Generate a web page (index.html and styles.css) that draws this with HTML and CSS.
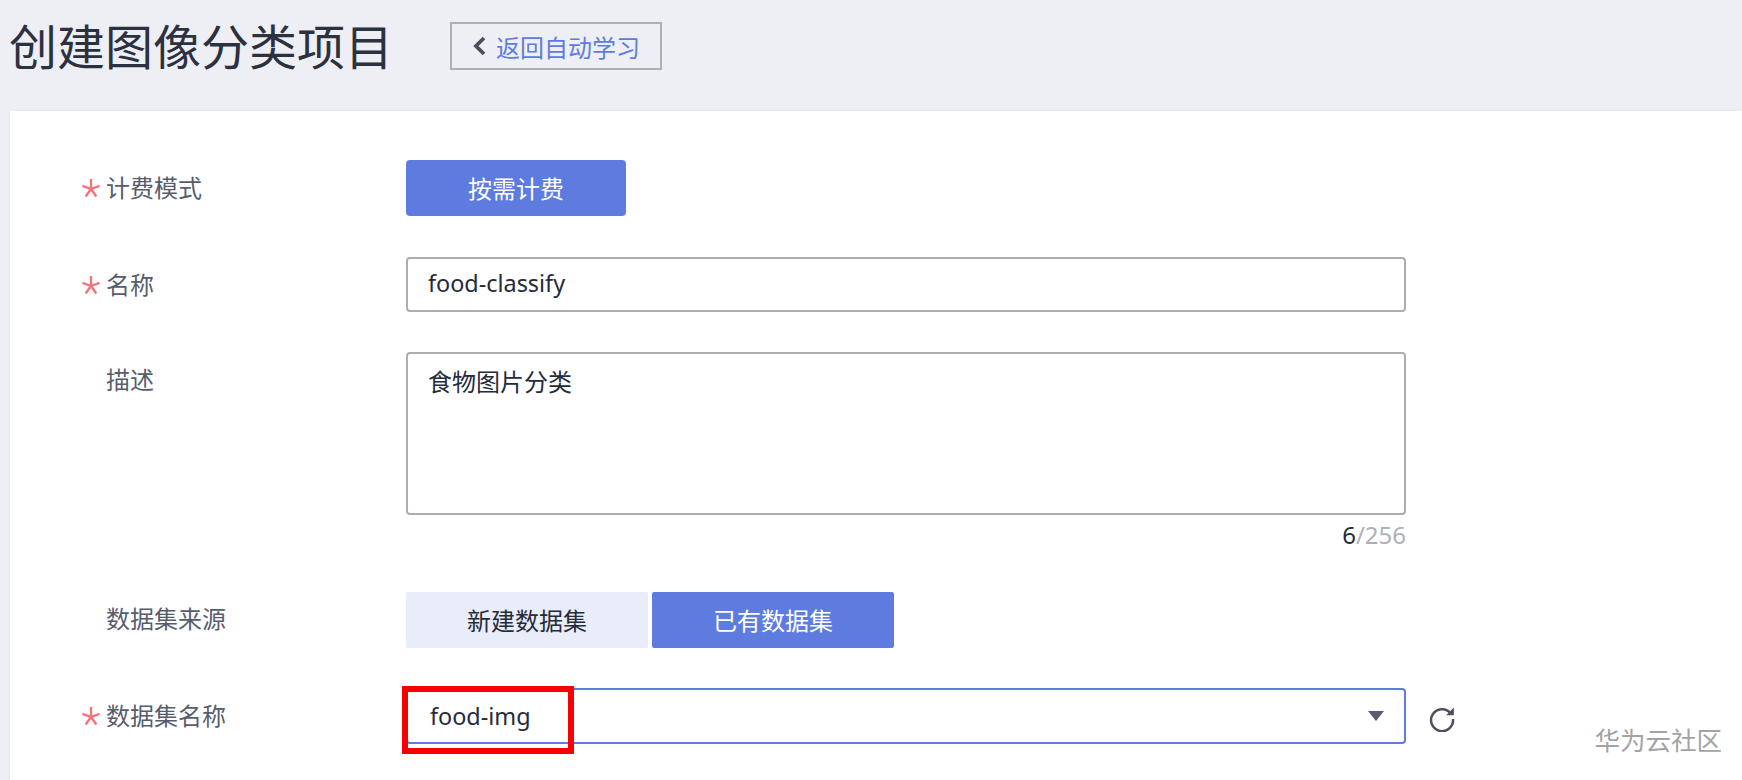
FILE: index.html
```html
<!DOCTYPE html>
<html lang="zh-CN">
<head>
    <meta charset="UTF-8">
    <title>创建图像分类项目</title>
    <link rel="stylesheet" href="styles.css">
</head>
<body>

    <!-- Page header -->
    <div class="header">
        <h1>创建图像分类项目</h1>
        <a class="back-btn" href="#">
            <svg class="back-icon" viewBox="0 0 14 20" width="14" height="20"><path d="M12 2 4 10l8 8" fill="none" stroke="#4c4f5e" stroke-width="3.8"/></svg>
            <span>返回自动学习</span>
        </a>
    </div>

    <!-- Form panel -->
    <div class="panel">
        <div class="row row-mode">
            <label class="field-label">
                <svg class="star" viewBox="0 0 18 18" width="18" height="18"><path d="M9 0v10M9 10 .5 6.8M9 10l8.5-3.2M9 10l-5.3 7.5M9 10l5.3 7.5" fill="none" stroke="#f4727a" stroke-width="2.4"/></svg>
                计费模式
            </label>
            <button class="btn btn-active btn-single">按需计费</button>
        </div>

        <div class="row row-name">
            <label class="field-label">
                <svg class="star" viewBox="0 0 18 18" width="18" height="18"><path d="M9 0v10M9 10 .5 6.8M9 10l8.5-3.2M9 10l-5.3 7.5M9 10l5.3 7.5" fill="none" stroke="#f4727a" stroke-width="2.4"/></svg>
                名称
            </label>
            <div class="input">food-classify</div>
        </div>

        <div class="row row-desc">
            <label class="field-label">描述</label>
            <div class="field-stack">
                <div class="textarea">食物图片分类</div>
                <div class="counter"><b>6</b>/256</div>
            </div>
        </div>

        <div class="row row-source">
            <label class="field-label">数据集来源</label>
            <div class="toggle">
                <button class="btn btn-plain">新建数据集</button>
                <button class="btn btn-active">已有数据集</button>
            </div>
        </div>

        <div class="row">
            <label class="field-label">
                <svg class="star" viewBox="0 0 18 18" width="18" height="18"><path d="M9 0v10M9 10 .5 6.8M9 10l8.5-3.2M9 10l-5.3 7.5M9 10l5.3 7.5" fill="none" stroke="#f4727a" stroke-width="2.4"/></svg>
                数据集名称
            </label>
            <div class="select">
                <span>food-img</span>
                <i class="caret"></i>
            </div>
            <svg class="refresh" viewBox="0 0 28 28" width="28" height="28"><path d="M22.6 9.2A11 11 0 1 0 25 15" fill="none" stroke="#4c4f5e" stroke-width="2.5"/><path d="M25.8 3.6v7.6h-7.6z" fill="#4c4f5e"/></svg>
            <div class="highlight"></div>
        </div>

        <div class="watermark">华为云社区</div>
    </div>

</body>
</html>
```

FILE: styles.css
```css
/* Reset margins and padding */
* {
    margin: 0;
    padding: 0;
    box-sizing: border-box;
}

body {
    font-family: "Noto Sans", "Noto Sans CJK SC", sans-serif;
    background-color: #eeeff5;
    color: #252b3a;
    height: 780px;
    overflow: hidden;
    display: flex;
    flex-direction: column;
}

/* Header */
.header {
    height: 111px;
    padding: 22px 0 0 9px;
    display: flex;
    align-items: flex-start;
}

.header h1 {
    font-size: 48px;
    font-weight: 400;
    line-height: 50px;
    width: 441px;
    color: #2c3140;
}

.back-btn {
    width: 212px;
    height: 48px;
    border: 2px solid #adaeb6;
    display: flex;
    align-items: center;
    padding-left: 20px;
    gap: 10px;
    font-size: 24px;
    color: #5e7ce0;
    text-decoration: none;
}

/* Form panel */
.panel {
    position: relative;
    flex-grow: 1;
    margin-left: 10px;
    padding: 49px 0 0 71px;
    background-color: #fff;
    box-shadow: 0 0 4px rgba(0, 0, 0, 0.06);
}

.row {
    position: relative;
    display: flex;
    align-items: flex-start;
}

.row-mode {
    margin-bottom: 41px;
}

.row-name {
    margin-bottom: 40px;
}

.row-source {
    margin-bottom: 40px;
}

.field-label {
    width: 325px;
    height: 55px;
    flex-shrink: 0;
    display: flex;
    align-items: center;
    padding: 0 0 3px 25px;
    position: relative;
    font-size: 24px;
    color: #575d6c;
}

.star {
    position: absolute;
    left: 1px;
    top: 19px;
}

/* Buttons */
.btn {
    width: 242px;
    height: 56px;
    border: none;
    border-radius: 2px;
    padding-bottom: 2px;
    font-family: inherit;
    font-size: 24px;
}

.btn-single {
    width: 220px;
    border-radius: 4px;
}

.btn-active {
    background-color: #5e7ce0;
    color: #fff;
}

.btn-plain {
    background-color: #e9edfa;
    color: #252b3a;
}

.toggle {
    display: flex;
    gap: 4px;
    margin-top: 1px;
}

/* Inputs */
.input,
.textarea,
.select {
    width: 1000px;
    border: 2px solid #adadb0;
    border-radius: 4px;
    padding-left: 20px;
    font-size: 24px;
    background-color: #fff;
}

.input,
.select {
    height: 55px;
    display: flex;
    align-items: center;
    font-size: 23.4px;
}

.input {
    padding-bottom: 3px;
}

.textarea {
    height: 163px;
    padding-top: 13px;
    line-height: 30px;
}

.field-stack {
    height: 239px;
}

.counter {
    text-align: right;
    font-size: 24px;
    line-height: 30px;
    margin-top: 5px;
    color: #adb0b8;
}

.counter b {
    font-weight: 400;
    color: #252b3a;
}

.select {
    height: 56px;
    border-color: #5e7ce0;
    justify-content: space-between;
    padding-right: 20px;
    padding-left: 22px;
}

.caret {
    width: 0;
    height: 0;
    border-left: 8px solid transparent;
    border-right: 8px solid transparent;
    border-top: 10px solid #575d6c;
}

.refresh {
    margin: 16px 0 0 22px;
}

/* Red annotation drawn over the select */
.highlight {
    position: absolute;
    left: 321px;
    top: -2px;
    width: 172px;
    height: 68px;
    border: 6px solid #fa0000;
}

.watermark {
    position: absolute;
    right: 20px;
    top: 609px;
    font-size: 25.5px;
    color: #a3a3a3;
}
```
